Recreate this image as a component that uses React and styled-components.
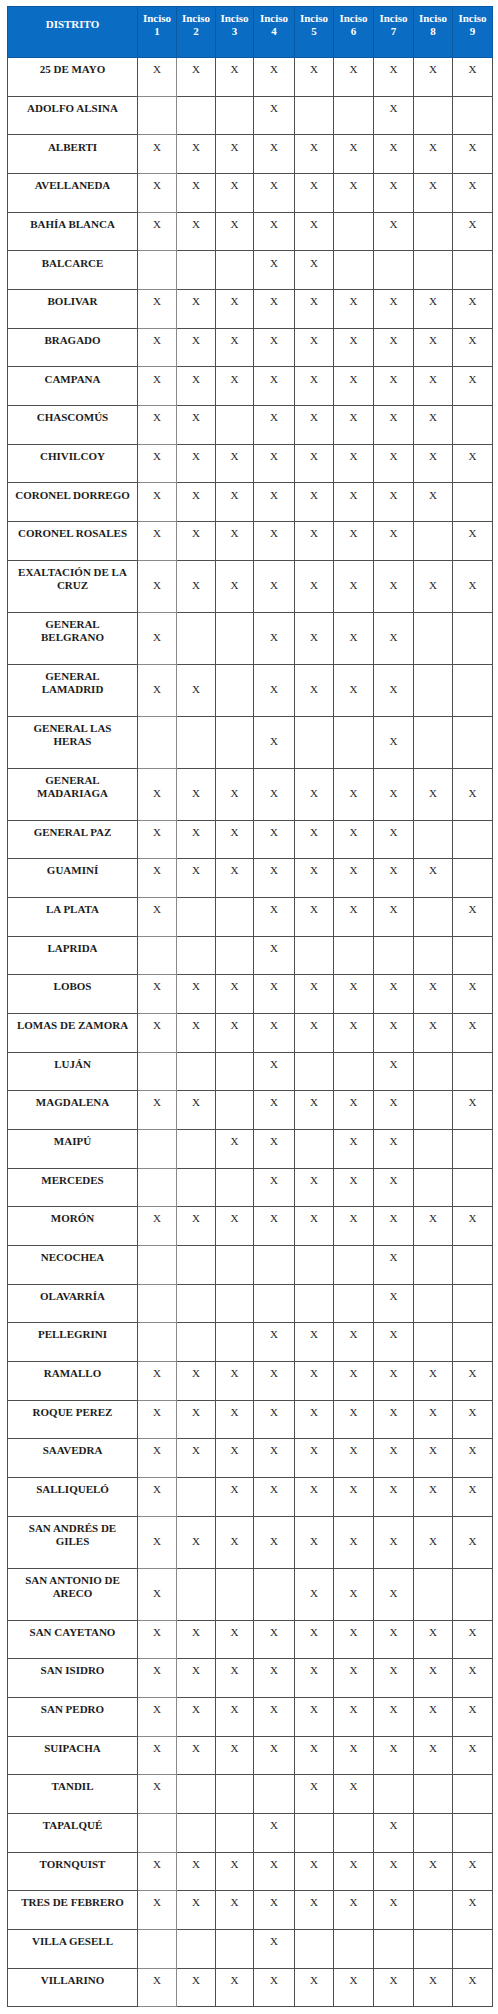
import React from "react";
import styled, { createGlobalStyle } from "styled-components";

const GlobalStyle = createGlobalStyle`
  html, body {
    margin: 0;
    padding: 0;
    background: #ffffff;
  }
  body {
    font-family: "Liberation Serif", "Times New Roman", serif;
  }
`;

const Page = styled.div`
  padding: 6px 6px 7px 7px;
`;

const Table = styled.table`
  width: 485px;
  table-layout: fixed;
  border-collapse: collapse;
  border: 1px solid #4a4a4a;
  font-family: "Liberation Serif", "Times New Roman", serif;
  font-size: 11px;
`;

const HeadCell = styled.th`
  background: #0b6cc3;
  color: #ffffff;
  font-weight: bold;
  text-align: center;
  vertical-align: middle;
  padding: 4.7px 2px;
  border: 1px solid #0a5aa3;
  white-space: pre;
`;

const Cell = styled.td`
  text-align: center;
  vertical-align: bottom;
  padding: 5.2px 2px;
  border: 1px solid ${(p) => (p.$soft ? "#8a8a8a" : "#4f4f4f")};
  color: ${(p) => (p.$name ? "#1c1c1c" : "#2a2a2a")};
  font-weight: ${(p) => (p.$name ? "bold" : "normal")};
  white-space: pre;
`;

const Line = styled.p`
  margin: 0 0 14px;
  line-height: 13.3px;
`;

const widths = [130, 39, 39, 38, 41, 39, 40, 40, 39, 40];

const ALL = [1, 2, 3, 4, 5, 6, 7, 8, 9];

const rows = [
  ["25 DE MAYO", ALL],
  ["ADOLFO ALSINA", [4, 7]],
  ["ALBERTI", ALL],
  ["AVELLANEDA", ALL],
  ["BAHÍA BLANCA", [1, 2, 3, 4, 5, 7, 9]],
  ["BALCARCE", [4, 5]],
  ["BOLIVAR", ALL],
  ["BRAGADO", ALL],
  ["CAMPANA", ALL],
  ["CHASCOMÚS", [1, 2, 4, 5, 6, 7, 8]],
  ["CHIVILCOY", ALL],
  ["CORONEL DORREGO", [1, 2, 3, 4, 5, 6, 7, 8]],
  ["CORONEL ROSALES", [1, 2, 3, 4, 5, 6, 7, 9]],
  ["EXALTACIÓN DE LA\nCRUZ", ALL],
  ["GENERAL\nBELGRANO", [1, 4, 5, 6, 7]],
  ["GENERAL\nLAMADRID", [1, 2, 4, 5, 6, 7]],
  ["GENERAL LAS\nHERAS", [4, 7]],
  ["GENERAL\nMADARIAGA", ALL],
  ["GENERAL PAZ", [1, 2, 3, 4, 5, 6, 7]],
  ["GUAMINÍ", [1, 2, 3, 4, 5, 6, 7, 8]],
  ["LA PLATA", [1, 4, 5, 6, 7, 9]],
  ["LAPRIDA", [4]],
  ["LOBOS", ALL],
  ["LOMAS DE ZAMORA", ALL],
  ["LUJÁN", [4, 7]],
  ["MAGDALENA", [1, 2, 4, 5, 6, 7, 9]],
  ["MAIPÚ", [3, 4, 6, 7]],
  ["MERCEDES", [4, 5, 6, 7]],
  ["MORÓN", ALL],
  ["NECOCHEA", [7]],
  ["OLAVARRÍA", [7]],
  ["PELLEGRINI", [4, 5, 6, 7]],
  ["RAMALLO", ALL],
  ["ROQUE PEREZ", ALL],
  ["SAAVEDRA", ALL],
  ["SALLIQUELÓ", [1, 3, 4, 5, 6, 7, 8, 9]],
  ["SAN ANDRÉS DE\nGILES", ALL],
  ["SAN ANTONIO DE\nARECO", [1, 5, 6, 7]],
  ["SAN CAYETANO", ALL],
  ["SAN ISIDRO", ALL],
  ["SAN PEDRO", ALL],
  ["SUIPACHA", ALL],
  ["TANDIL", [1, 5, 6]],
  ["TAPALQUÉ", [4, 7]],
  ["TORNQUIST", ALL],
  ["TRES DE FEBRERO", [1, 2, 3, 4, 5, 6, 7, 9]],
  ["VILLA GESELL", [4]],
  ["VILLARINO", ALL],
];

export default function App() {
  return (
    <>
      <GlobalStyle />
      <Page>
        <Table>
          <colgroup>
            {widths.map((w, i) => (
              <col key={i} style={{ width: w }} />
            ))}
          </colgroup>
          <thead>
            <tr>
              <HeadCell>
                <Line>DISTRITO</Line>
              </HeadCell>
              {ALL.map((n) => (
                <HeadCell key={n}>
                  <Line>{`Inciso\n${n}`}</Line>
                </HeadCell>
              ))}
            </tr>
          </thead>
          <tbody>
            {rows.map(([name, marks]) => (
              <tr key={name}>
                <Cell $name>
                  <Line>{name}</Line>
                </Cell>
                {ALL.map((n) => (
                  <Cell key={n} $soft={n === 1}>
                    <Line>{marks.includes(n) ? "X" : "\u00a0"}</Line>
                  </Cell>
                ))}
              </tr>
            ))}
          </tbody>
        </Table>
      </Page>
    </>
  );
}
